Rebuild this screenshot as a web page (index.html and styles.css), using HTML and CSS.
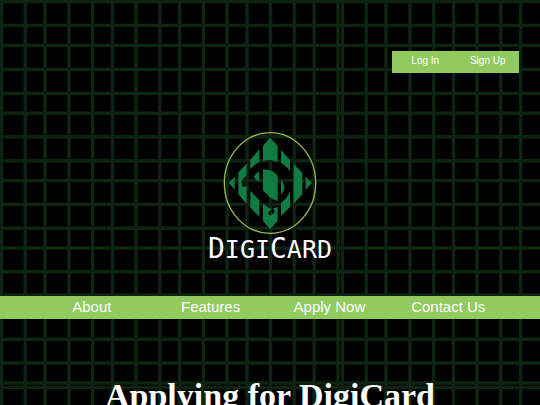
FILE: index.html
```html
<!DOCTYPE html>
<html lang="en">
<head>
    <meta charset="UTF-8">
    <meta name="viewport" content="width=device-width, initial-scale=1.0">
    <title>DigiCard</title>
    <link rel="stylesheet" href="styles.css">
</head>
<body>
    <header>
        <div class="account">
            <a href="login.html">Log In</a>
            <a href="signup.html">Sign Up</a>
        </div>
        <a class="logo" href="index.html">
            <svg class="emblem" viewBox="25 18 282 312" aria-hidden="true">
                <ellipse cx="166" cy="174" rx="137" ry="151" fill="none" stroke="#93b84c" stroke-width="4"/>
                <g fill="#107c41">
                    <path d="M166 38L189 62V110Q168 101 145 108V62Z"/>
                    <path d="M134 73V111Q118 119 107 133V104Z"/>
                    <path d="M199 75L226 105V137Q214 122 199 113Z"/>
                    <path d="M96 116V150L80 168L84 186L96 184V236L71 208V142Z"/>
                    <path d="M237 117L263 143V208L237 236Z"/>
                    <path d="M60 155V193L42 174Z"/>
                    <path d="M273 155L292 174L273 194Z"/>
                    <path d="M145 134Q172 131 189 152V228Q176 226 162 214L145 196Z"/>
                    <path d="M134 139V172L117 157Q123 145 134 139Z"/>
                    <path d="M199 164Q220 186 199 209Z"/>
                    <path d="M107 197L134 226V276L107 247Z"/>
                    <path d="M226 201V246L199 273V234Q216 221 226 201Z"/>
                    <path d="M145 237L170 253L160 263L166 272L180 262L176 250L189 246V287L166 313L145 287Z"/>
                </g>
            </svg>
            <span class="name">D<span>IGI</span>C<span>ARD</span></span>
        </a>
    </header>
    <nav>
        <ul>
            <li><a href="about.html">About</a></li>
            <li><a href="features.html">Features</a></li>
            <li><a href="apply.html">Apply Now</a></li>
            <li><a href="contact.html">Contact Us</a></li>
        </ul>
    </nav>
    <main>
        <h1>Applying for DigiCard</h1>
    </main>
</body>
</html>
```
FILE: styles.css
```css
body {
    margin: 0;
    color: white;
    font-family: "Liberation Sans", Arial, sans-serif;
    background-color: black;
    /* green wire grid, one tile */
    background-image: url("data:image/svg+xml,%3Csvg xmlns='http://www.w3.org/2000/svg' width='341' height='386'%3E%3Cpath fill='none' stroke='%230d2410' stroke-width='3.4' d='M1.5 0v386M25.2 0v386M45 0v386M69 0v386M92.7 0v386M112.5 0v386M136 0v386M159.8 0v386M179.7 0v386M203.3 0v386M227 0v386M247 0v386M270.5 0v386M294.2 0v386M314.2 0v386M338 0v386M0 1.5h341M0 25.4h341M0 45.4h341M0 69.4h341M0 93.4h341M0 113.3h341M0 136.8h341M0 160.8h341M0 180.6h341M0 204.4h341M0 228.2h341M0 248h341M0 271.8h341M0 295h341M0 315h341M0 339.3h341M0 363h341M0 383h341'/%3E%3C/svg%3E");
}
a {
    color: white;
    text-decoration: none;
}
header {
    display: flex;
    flex-direction: column;
    padding-top: 51px;
}
.account {
    display: flex;
    align-self: flex-end;
    box-sizing: border-box;
    width: 127px;
    margin-right: 21px;
    padding: 0 0 2px 2px;
    background-color: #91ca5f;
    font-size: 10px;
    line-height: 20px;
}
.account a {
    flex: 1;
    text-align: center;
}
.logo {
    display: flex;
    flex-direction: column;
    align-items: center;
    align-self: center;
    margin-top: 58px;
}
.emblem {
    width: 94px;
    height: 104px;
}
.name {
    font-family: "DejaVu Sans Mono", monospace;
    font-size: 28px;
    line-height: 28px;
}
.name span {
    font-size: 25px;
}
nav {
    margin-top: 32px;
    padding-bottom: 2px;
    background-color: #91ca5f;
}
nav ul {
    display: flex;
    margin: 0;
    padding: 0 6%;
    list-style: none;
}
nav li {
    flex: 1;
    text-align: center;
    font-size: 15px;
    line-height: 21px;
}
h1 {
    margin: 58px 0;
    text-align: center;
    font-family: "Liberation Serif", "Times New Roman", serif;
    font-size: 34px;
    line-height: 38px;
}
```
